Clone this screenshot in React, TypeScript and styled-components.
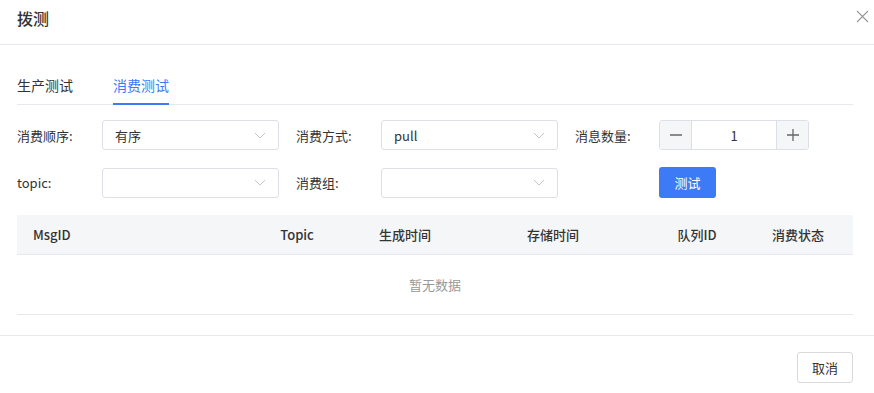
import React from 'react';
import styled, { createGlobalStyle } from 'styled-components';

const GlobalStyle = createGlobalStyle`
  html, body {
    margin: 0;
    padding: 0;
    background: #fff;
  }
  body {
    font-family: "Noto Sans CJK SC", "Liberation Sans", sans-serif;
    color: #333;
    font-size: 13px;
  }
  * { box-sizing: border-box; }
`;

const Modal = styled.div`
  width: 874px;
  height: 393px;
  background: #fff;
  display: flex;
  flex-direction: column;
  overflow: hidden;
`;

const Header = styled.div`
  height: 45px;
  padding: 7px 17px 0 17px;
  border-bottom: 1px solid #e6e8ee;
  display: flex;
  justify-content: space-between;
  align-items: flex-start;
`;

const Title = styled.div`
  font-size: 16px;
  font-weight: 500;
  line-height: 22px;
  color: #333;
`;

const Close = styled.button`
  border: none;
  background: none;
  padding: 0;
  margin: 3px -13px 0 0;
  width: 14px;
  height: 14px;
  cursor: pointer;
  display: flex;
`;

const Body = styled.div`
  padding: 0 21px 0 17px;
  flex: 1;
`;

const TabBar = styled.div`
  margin-top: 28px;
  display: flex;
  gap: 40px;
  border-bottom: 1px solid #e6e8ee;
`;

const Tab = styled.div<{ $active?: boolean }>`
  font-size: 14px;
  line-height: 24px;
  padding-bottom: 6px;
  margin-bottom: -1px;
  color: ${(p) => (p.$active ? '#3d7af5' : '#333')};
  border-bottom: 2px solid ${(p) => (p.$active ? '#3d7af5' : 'transparent')};
`;

const Form = styled.div`
  margin-top: 15px;
  display: grid;
  grid-template-columns: 85px 177px 102px 177px 101px 150px;
  row-gap: 17px;
  align-items: center;
`;

const Label = styled.div<{ $indent?: boolean }>`
  font-size: 13px;
  color: #333;
  white-space: nowrap;
  padding-left: ${(p) => (p.$indent ? '17px' : '0')};
`;

const SelectBox = styled.div`
  height: 30px;
  border: 1px solid #dcdfe6;
  border-radius: 3px;
  display: flex;
  align-items: center;
  justify-content: space-between;
  padding: 0 12px;
  font-size: 13px;
  color: #333;
`;

const NumberBox = styled.div`
  height: 30px;
  border: 1px solid #dcdfe6;
  border-radius: 3px;
  display: flex;
  overflow: hidden;
`;

const StepBtn = styled.div<{ $side: 'left' | 'right' }>`
  width: 32px;
  background: #f5f6f8;
  display: flex;
  align-items: center;
  justify-content: center;
  ${(p) => (p.$side === 'left' ? 'border-right' : 'border-left')}: 1px solid #dcdfe6;
`;

const NumValue = styled.div`
  flex: 1;
  display: flex;
  align-items: center;
  justify-content: center;
  font-size: 13px;
  color: #333;
`;

const PrimaryButton = styled.button`
  display: block;
  width: 57px;
  height: 31px;
  border: none;
  border-radius: 3px;
  background: #3d7af5;
  color: #fff;
  font-family: inherit;
  font-size: 13px;
  cursor: pointer;
`;

const Table = styled.div`
  margin-top: 17px;
  width: 836px;
`;

const HeadRow = styled.div`
  display: grid;
  grid-template-columns: 235px 90px 126px 170px 118px 84px 13px;
  height: 40px;
  align-items: center;
  background: #f5f6f8;
  border-bottom: 1px solid #e6e8ee;
`;

const Th = styled.div<{ $align?: 'left' | 'center' }>`
  font-size: 13px;
  font-weight: 500;
  color: #333;
  text-align: ${(p) => p.$align || 'center'};
  padding-left: ${(p) => (p.$align === 'left' ? '16px' : '0')};
`;

const Empty = styled.div`
  height: 60px;
  border-bottom: 1px solid #e6e8ee;
  display: flex;
  align-items: center;
  justify-content: center;
  font-size: 13px;
  color: #999;
`;

const Footer = styled.div`
  border-top: 1px solid #e6e8ee;
  height: 58px;
  padding: 16px 21px 0 0;
  display: flex;
  justify-content: flex-end;
  align-items: flex-start;
`;

const Button = styled.button`
  width: 56px;
  height: 31px;
  border: 1px solid #d9d9d9;
  border-radius: 3px;
  background: #fff;
  color: #333;
  font-family: inherit;
  font-size: 13px;
  cursor: pointer;
`;

const Chevron = () => (
  <svg width="12" height="7" viewBox="0 0 12 7" fill="none">
    <path d="M1 1l5 5 5-5" stroke="#c0c4cc" strokeWidth="1" />
  </svg>
);

const Select: React.FC<{ value?: string }> = ({ value }) => (
  <SelectBox>
    <span>{value}</span>
    <Chevron />
  </SelectBox>
);

const columns = ['Topic', '生成时间', '存储时间', '队列ID', '消费状态'];

const App: React.FC = () => {
  return (
    <>
      <GlobalStyle />
      <Modal>
        <Header>
          <Title>拨测</Title>
          <Close aria-label="close">
            <svg width="13" height="13" viewBox="0 0 13 13">
              <path d="M1 1l11 11M12 1L1 12" stroke="#999" strokeWidth="1.1" />
            </svg>
          </Close>
        </Header>
        <Body>
          <TabBar>
            <Tab>生产测试</Tab>
            <Tab $active>消费测试</Tab>
          </TabBar>
          <Form>
            <Label>消费顺序:</Label>
            <Select value="有序" />
            <Label $indent>消费方式:</Label>
            <Select value="pull" />
            <Label $indent>消息数量:</Label>
            <NumberBox>
              <StepBtn $side="left">
                <svg width="12" height="12" viewBox="0 0 12 12">
                  <path d="M0 6h12" stroke="#666" strokeWidth="1.3" />
                </svg>
              </StepBtn>
              <NumValue>1</NumValue>
              <StepBtn $side="right">
                <svg width="12" height="12" viewBox="0 0 12 12">
                  <path d="M0 6h12M6 0v12" stroke="#666" strokeWidth="1.3" />
                </svg>
              </StepBtn>
            </NumberBox>
            <Label>topic:</Label>
            <Select />
            <Label $indent>消费组:</Label>
            <Select />
            <Label $indent />
            <div>
              <PrimaryButton>测试</PrimaryButton>
            </div>
          </Form>
          <Table>
            <HeadRow>
              <Th $align="left">MsgID</Th>
              {columns.map((c) => (
                <Th key={c}>{c}</Th>
              ))}
              <div />
            </HeadRow>
            <Empty>暂无数据</Empty>
          </Table>
        </Body>
        <Footer>
          <Button>取消</Button>
        </Footer>
      </Modal>
    </>
  );
};

export default App;
